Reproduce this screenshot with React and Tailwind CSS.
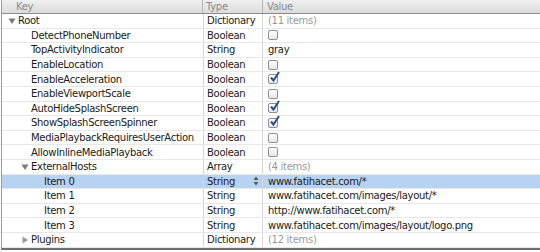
import React from 'react';

const rows = [
  { key: 'Root', level: 0, toggle: 'open', type: 'Dictionary', value: '(11 items)', muted: true },
  { key: 'DetectPhoneNumber', level: 1, type: 'Boolean', check: false },
  { key: 'TopActivityIndicator', level: 1, type: 'String', value: 'gray' },
  { key: 'EnableLocation', level: 1, type: 'Boolean', check: false },
  { key: 'EnableAcceleration', level: 1, type: 'Boolean', check: true },
  { key: 'EnableViewportScale', level: 1, type: 'Boolean', check: false },
  { key: 'AutoHideSplashScreen', level: 1, type: 'Boolean', check: true },
  { key: 'ShowSplashScreenSpinner', level: 1, type: 'Boolean', check: true },
  { key: 'MediaPlaybackRequiresUserAction', level: 1, type: 'Boolean', check: false },
  { key: 'AllowInlineMediaPlayback', level: 1, type: 'Boolean', check: false },
  { key: 'ExternalHosts', level: 1, toggle: 'open', type: 'Array', value: '(4 items)', muted: true },
  { key: 'Item 0', level: 2, type: 'String', value: 'www.fatihacet.com/*', selected: true },
  { key: 'Item 1', level: 2, type: 'String', value: 'www.fatihacet.com/images/layout/*' },
  { key: 'Item 2', level: 2, type: 'String', value: 'http://www.fatihacet.com/*' },
  { key: 'Item 3', level: 2, type: 'String', value: 'www.fatihacet.com/images/layout/logo.png' },
  { key: 'Plugins', level: 1, toggle: 'closed', type: 'Dictionary', value: '(12 items)', muted: true },
];

const Triangle = ({ open }) => (
  <svg width="8" height="8" viewBox="0 0 8 8" className="shrink-0">
    {open ? <path d="M0.5 1.5 L7.5 1.5 L4 7 Z" fill="#7a7a7a" /> : <path d="M1.5 0.5 L7 4 L1.5 7.5 Z" fill="#9a9a9a" />}
  </svg>
);

const Checkbox = ({ checked }) => (
  <div className="relative w-[10px] h-[10px] rounded-[2px] border border-[#8f8f8f] bg-gradient-to-b from-white to-[#e6e6e6]">
    {checked && (
      <svg width="12" height="12" viewBox="0 0 12 12" className="absolute -top-[4px] left-[0px]">
        <path d="M2 6.5 L4.5 9.5 L10 1" fill="none" stroke="#2a4f8f" strokeWidth="2" />
      </svg>
    )}
  </div>
);

const Stepper = () => (
  <svg width="6" height="10" viewBox="0 0 6 10" className="mr-[3px]">
    <path d="M0.5 4 L3 0.5 L5.5 4 Z" fill="#555" />
    <path d="M0.5 6 L3 9.5 L5.5 6 Z" fill="#555" />
  </svg>
);

const keyPad = (r) => {
  if (r.toggle) return r.level === 0 ? 'pl-[6px]' : 'pl-[19px]';
  return r.level === 1 ? 'pl-[29px]' : 'pl-[42px]';
};

export default function App() {
  return (
    <div
      className="w-[540px] h-[252px] bg-white overflow-hidden text-[10px] tracking-[-0.3px] text-[#1a1a1a]"
      style={{ fontFamily: '"DejaVu Sans", "Liberation Sans", sans-serif' }}
    >
      <div className="ml-[1px] border-l border-[#9a9a9a] border-b-2 border-b-[#6f6f6f]">
        {/* header */}
        <div className="flex h-[14px] bg-gradient-to-b from-[#f0f0f0] to-[#dcdcdc] border-b border-[#8c8c8c] text-[#8a8a8a] leading-[13px]">
          <div className="w-[201px] pl-[14px] border-r border-[#b5b5b5]">Key</div>
          <div className="w-[60px] pl-[3px] border-r border-[#b5b5b5]">Type</div>
          <div className="flex-1 pl-[4px]">Value</div>
        </div>
        {rows.map((r) => (
          <div
            key={r.key}
            className={`flex h-[14.6px] items-center border-b border-[#e8e8e8] ${r.selected ? 'bg-[#b8d2f2]' : 'bg-white'}`}
          >
            <div className={`w-[201px] h-full flex items-center gap-[2px] whitespace-nowrap ${keyPad(r)}`}>
              {r.toggle && <Triangle open={r.toggle === 'open'} />}
              <span>{r.key}</span>
            </div>
            <div className="w-[60px] h-full flex items-center justify-between pl-[3px] border-l border-r border-[#d6d6d6]">
              <span>{r.type}</span>
              {r.selected && <Stepper />}
            </div>
            <div className="flex-1 h-full flex items-center pl-[5px] whitespace-nowrap">
              {r.check !== undefined ? (
                <Checkbox checked={r.check} />
              ) : (
                <span className={r.muted ? 'text-[#9a9a9a]' : ''}>{r.value}</span>
              )}
            </div>
          </div>
        ))}
      </div>
    </div>
  );
}
